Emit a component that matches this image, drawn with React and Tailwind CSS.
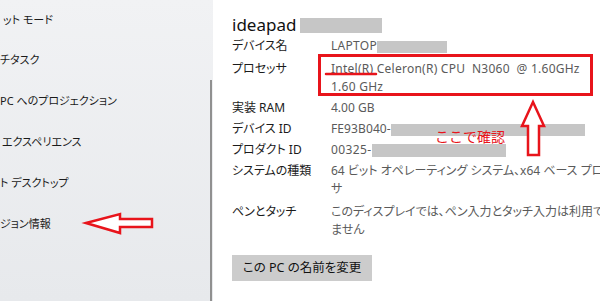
import React from "react";

const F = "font-['Noto_Sans','Noto_Sans_CJK_JP',sans-serif] [font-feature-settings:'palt']";

function Redact({ w, h = 13, className = "" }) {
  return <span className={`inline-block bg-[#c6c6c6] align-middle ${className}`} style={{ width: w, height: h }} />;
}

function Row({ label, children, className = "", vw = "w-[285px]" }) {
  return (
    <div className={`flex ${className}`}>
      <div className="w-[99px] shrink-0 text-[#1b1b1b]">{label}</div>
      <div className={`${vw} shrink-0 text-[#5a5a5a]`}>{children}</div>
    </div>
  );
}

export default function App() {
  const leftItems = [
    { t: "ット モード", ml: "ml-[3px]" },
    { t: "チタスク", ml: "ml-0" },
    { t: "PC へのプロジェクション", ml: "ml-0" },
    { t: "エクスペリエンス", ml: "ml-[2px]" },
    { t: "ト デスクトップ", ml: "ml-0" },
    { t: "ジョン情報", ml: "ml-0" },
  ];
  return (
    <div className={`relative flex h-[301px] w-[600px] overflow-hidden bg-white ${F}`}>
      {/* left nav */}
      <div className="flex h-full w-[213px] shrink-0 bg-gradient-to-b from-[#f1f2f4] to-[#e7e9ec]">
        <div className="flex flex-1 flex-col -mt-[0.5px]">
          {leftItems.map((it, i) => (
            <div key={i} className={`flex h-[40.8px] items-center text-[11px] text-[#1a1a1a] ${it.ml}`}>
              {it.t}
            </div>
          ))}
        </div>
        <div className="flex w-[3px] flex-col pt-[80px]">
          <div className="h-full w-[2px] bg-[#909090]" />
        </div>
      </div>

      {/* right content */}
      <div className="flex flex-col pl-[19px] pt-[14px] text-[12px] leading-[18px]">
        <div className="flex items-center gap-[4px] text-[17px] leading-[22px] text-[#111]">
          <span>ideapad</span>
          <Redact w={82} h={15} />
        </div>
        <div className="mt-[1px] flex flex-col gap-[3px]">
          <Row label="デバイス名" className="mb-[2px]">
            <span className="tracking-[0.3px]">LAPTOP</span>
            <Redact w={70} h={12} />
          </Row>
          <Row label="プロセッサ">
            <div className="whitespace-pre tracking-[0.25px]">Intel(R) Celeron(R) CPU  N3060  @ 1.60GHz</div>
            <div className="tracking-[0.25px]">1.60 GHz</div>
          </Row>
          <Row label="実装 RAM">4.00 GB</Row>
          <Row label="デバイス ID">
            <span className="tracking-[0.1px]">FE93B040-</span>
            <Redact w={194} h={12} />
          </Row>
          <Row label="プロダクト ID">
            <span className="tracking-[0.4px]">00325-</span>
            <Redact w={134} h={13} />
          </Row>
          <Row label="システムの種類" vw="w-[300px]" className="mb-[2px]">
            64 ビット オペレーティング システム、x64 ベース プロセッサ
          </Row>
          <Row label="ペンとタッチ">このディスプレイでは、ペン入力とタッチ入力は利用できません</Row>
        </div>
        <button className="mt-[16px] h-[26px] w-[140px] bg-[#cccccc] text-[12.5px] text-[#111]">
          この PC の名前を変更
        </button>
      </div>

      {/* annotations */}
      <svg className="pointer-events-none absolute left-0 top-0" width="600" height="301" viewBox="0 0 600 301">
        <rect x="319.5" y="55.5" width="272" height="39" fill="none" stroke="#e8141b" strokeWidth="3" />
        <line x1="326" y1="74" x2="376" y2="74" stroke="#e8141b" strokeWidth="2.5" strokeLinecap="round" />
        <path d="M533 102 L544 126 L539 126 L539 155 L528 155 L528 126 L522 126 Z" fill="#fff" stroke="#e8141b" strokeWidth="2.5" strokeLinejoin="miter" />
        <path d="M86 223 L120 214 L120 219 L152 219 L152 227 L120 227 L120 233 Z" fill="#fff" stroke="#e8141b" strokeWidth="2.5" />
      </svg>
      <div className="pointer-events-none absolute left-[435px] top-[128px] text-[14px] leading-[17px] text-[#e8141b] [font-feature-settings:normal]">
        ここで確認
      </div>
    </div>
  );
}
